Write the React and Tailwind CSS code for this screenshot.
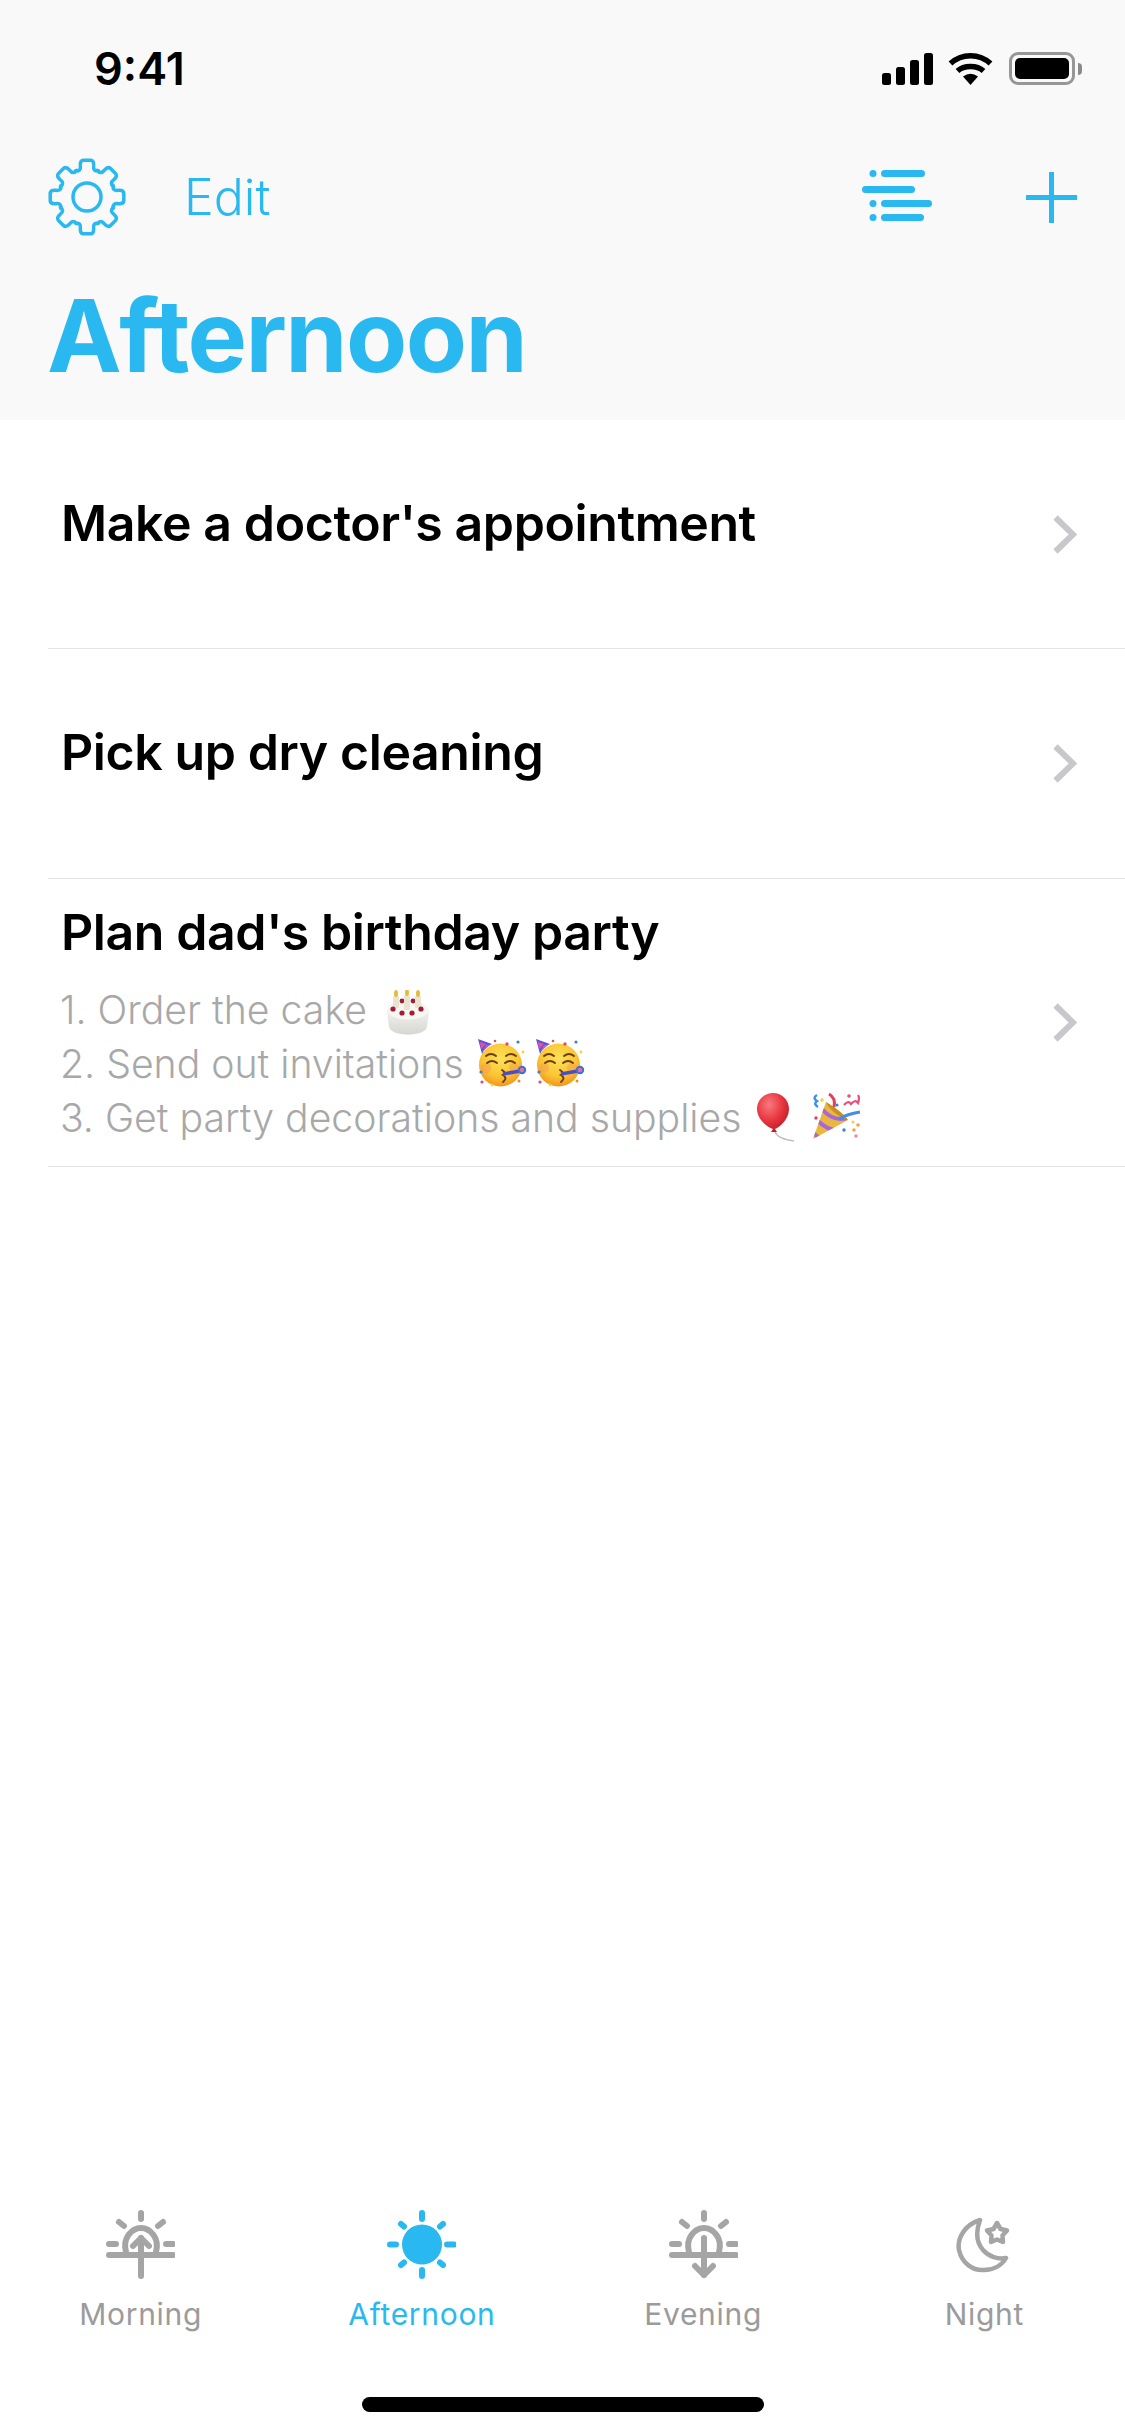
const BLUE = "#29b9f0";
const GRAY = "#a5a5a5";

function gearPath() {
    const c = 39;
    const pt = (deg, r) => {
        const a = (deg * Math.PI) / 180;
        return `${(c + r * Math.cos(a)).toFixed(2)} ${(c + r * Math.sin(a)).toFixed(2)}`;
    };
    let d = "";
    for (let i = 0; i < 8; i++) {
        const t = i * 45 - 90;
        d += `${i === 0 ? "M" : "L"}${pt(t - 24, 28.5)} `;
        d += `Q${pt(t - 13, 26)} ${pt(t - 12, 32)} `;
        d += `Q${pt(t - 11, 37)} ${pt(t - 6, 37)} `;
        d += `L${pt(t + 6, 37)} `;
        d += `Q${pt(t + 11, 37)} ${pt(t + 12, 32)} `;
        d += `Q${pt(t + 13, 26)} ${pt(t + 24, 28.5)} `;
    }
    return d + "Z";
}

function Gear() {
    return (
        <svg width="78" height="78" viewBox="0 0 78 78" fill="none" stroke={BLUE} strokeWidth="3.5" strokeLinejoin="round">
            <path d={gearPath()} />
            <circle cx="39" cy="39" r="14" />
        </svg>
    );
}

function Signal() {
    return (
        <svg width="51" height="32" viewBox="0 0 51 32" fill="#000">
            <rect x="0" y="20" width="9" height="12" rx="2.5" />
            <rect x="14" y="14" width="9" height="18" rx="2.5" />
            <rect x="28" y="7" width="9" height="25" rx="2.5" />
            <rect x="42" y="0" width="9" height="32" rx="2.5" />
        </svg>
    );
}

function Wifi() {
    return (
        <svg width="45" height="33" viewBox="0 0 45 33" fill="none" stroke="#000" strokeWidth="5.5">
            <path d="M2.5 11.5C13.5 1 31.5 1 42.5 11.5" />
            <path d="M9.5 19C16 13 29 13 35.5 19" />
            <path d="M15 24.5Q22.5 19 30 24.5L22.5 33Z" fill="#000" stroke="none" />
        </svg>
    );
}

function Battery() {
    return (
        <div className="flex items-center ml-[1px]">
            <div className="w-[66px] h-[33px] rounded-[9px] border-[3px] border-[#979797] p-[3px]">
                <div className="w-full h-full rounded-[5px] bg-black" />
            </div>
            <div className="ml-[3px] w-[4px] h-[12px] rounded-r-[4px] bg-[#8a8a8a]" />
        </div>
    );
}

function ListIcon() {
    return (
        <svg width="70" height="54" viewBox="0 0 70 54" fill={BLUE}>
            <circle cx="11" cy="3.5" r="3.5" />
            <rect x="19" y="0" width="44" height="7" rx="3.5" />
            <rect x="0" y="16" width="53" height="7" rx="3.5" />
            <circle cx="11" cy="33.5" r="3.5" />
            <rect x="19" y="30" width="51" height="7" rx="3.5" />
            <circle cx="11" cy="47.5" r="3.5" />
            <rect x="19" y="44" width="43" height="7" rx="3.5" />
        </svg>
    );
}

function Plus() {
    return (
        <svg width="51" height="51" viewBox="0 0 51 51" fill={BLUE}>
            <rect x="23" y="0" width="5" height="51" />
            <rect x="0" y="23" width="51" height="5" />
        </svg>
    );
}

function Chevron() {
    return (
        <svg width="24" height="39" viewBox="0 0 24 39" fill="none" stroke="#c7c7cc" strokeWidth="6">
            <path d="M2.5 2.5L20 19.5L2.5 36.5" />
        </svg>
    );
}

function Rays({ color }) {
    return (
        <g stroke={color} strokeWidth="6" strokeLinecap="round" fill="none">
            <path d="M35 3V9" />
            <path d="M13 12L18 16" />
            <path d="M57 12L52 16" />
            <path d="M3 34H10" />
            <path d="M60 34H67" />
        </g>
    );
}

function Sunrise() {
    return (
        <svg width="69" height="69" viewBox="0 0 69 69">
            <Rays color={GRAY} />
            <g stroke={GRAY} strokeWidth="6" strokeLinecap="round" strokeLinejoin="round" fill="none">
                <path d="M20 42C16 28 26 18 35 18C44 18 54 28 50 42" />
                <path d="M3 45H67" />
                <path d="M35 66V28" />
                <path d="M27 36L35 28L43 36" />
            </g>
        </svg>
    );
}

function Sunset() {
    return (
        <svg width="69" height="69" viewBox="0 0 69 69">
            <Rays color={GRAY} />
            <g stroke={GRAY} strokeWidth="6" strokeLinecap="round" strokeLinejoin="round" fill="none">
                <path d="M20 42C16 28 26 18 35 18C44 18 54 28 50 42" />
                <path d="M3 45H67" />
                <path d="M35 28V65" />
                <path d="M26 56L35 65L44 56" />
            </g>
        </svg>
    );
}

function Sun() {
    return (
        <svg width="69" height="69" viewBox="0 0 69 69">
            <circle cx="35" cy="34.5" r="20" fill={BLUE} />
            <g stroke={BLUE} strokeWidth="6" strokeLinecap="round">
                <path d="M35 3V9" />
                <path d="M35 60V66" />
                <path d="M3 34.5H9" />
                <path d="M60 34.5H67" />
                <path d="M14 14L17 16.5" />
                <path d="M56 14L53 16.5" />
                <path d="M14 55L17 52.5" />
                <path d="M56 55L53 52.5" />
            </g>
        </svg>
    );
}

function Moon() {
    return (
        <svg width="56" height="56" viewBox="0 0 56 56" fill="none" stroke={GRAY} strokeWidth="4.5" strokeLinejoin="round">
            <path d="M24 3C8 8 1 22 3 33C6 47 18 54 28 53C38 53 46 48 50 41C34 44 14 30 24 3Z" />
            <path d="M41 6L44.5 12L51 13.5L46.5 18.5L47 25L41 22.5L35 25L35.5 18.5L31 13.5L37.5 12Z" />
        </svg>
    );
}

function Cake() {
    return (
        <svg className="inline-block align-[-12px] ml-[18px]" width="46" height="46" viewBox="0 0 46 46">
            <defs>
                <linearGradient id="cakeSide" x1="0" y1="0" x2="0" y2="1">
                    <stop offset="0" stopColor="#f7f7f5" />
                    <stop offset="1" stopColor="#d6d6d2" />
                </linearGradient>
            </defs>
            <path d="M2 21C2 13 44 13 44 21L42 37C40 47 6 47 4 37Z" fill="url(#cakeSide)" />
            <ellipse cx="23" cy="20" rx="20.5" ry="9.5" fill="#f6f6f3" />
            <g fill="#a51c34">
                <circle cx="17" cy="11" r="2.4" />
                <circle cx="28" cy="11" r="2.4" />
            </g>
            <g fill="#e9e4d2">
                <rect x="8" y="6" width="6" height="12" rx="1" />
                <rect x="19" y="5" width="6" height="15" rx="1" />
                <rect x="30" y="6" width="6" height="12" rx="1" />
            </g>
            <g fill="#e5bb3c">
                <ellipse cx="11" cy="3.5" rx="2" ry="3.5" />
                <ellipse cx="22" cy="2.5" rx="2" ry="3.5" />
                <ellipse cx="33" cy="3.5" rx="2" ry="3.5" />
            </g>
            <g fill="#a51c34">
                <circle cx="8" cy="19" r="2.6" />
                <circle cx="17" cy="23" r="2.6" />
                <circle cx="27" cy="23" r="2.6" />
                <circle cx="36" cy="19" r="2.6" />
            </g>
        </svg>
    );
}

function PartyFace({ className }) {
    return (
        <svg className={className} width="50" height="50" viewBox="0 0 50 50">
            <defs>
                <radialGradient id="faceFill" cx="0.5" cy="0.35" r="0.7">
                    <stop offset="0" stopColor="#fde15a" />
                    <stop offset="0.6" stopColor="#fbc531" />
                    <stop offset="1" stopColor="#f08a1c" />
                </radialGradient>
            </defs>
            <circle cx="23.5" cy="27" r="21.5" fill="url(#faceFill)" />
            <circle cx="9" cy="30" r="5" fill="#f59a55" opacity="0.5" />
            <circle cx="37" cy="30" r="5" fill="#f59a55" opacity="0.5" />
            <path d="M1 1L15 6Q8 9 5 16Z" fill="#5b57d6" />
            <path d="M3 4L9 6L4 11ZM9 7L13 7L6 13Z" fill="#e84fa0" />
            <g fill="none" stroke="#6d3d12" strokeWidth="2" strokeLinecap="round">
                <path d="M9 18Q14 14 19 18" />
                <path d="M29 18Q34 14 39 18" />
                <path d="M10 25Q15 21 20 25" />
                <path d="M28 25Q33 21 38 25" />
                <path d="M25 32Q30 35 26 37Q31 40 26 44" />
            </g>
            <path d="M26 36L43 33" stroke="#4c4fc4" strokeWidth="3.5" />
            <circle cx="45" cy="32" r="3.2" fill="#e86f9a" stroke="#3f6fd0" strokeWidth="2" />
            <g fill="#e14b6d">
                <circle cx="30" cy="6" r="1.7" />
                <circle cx="5" cy="44" r="1.6" />
                <circle cx="18" cy="3" r="1.3" />
            </g>
            <g fill="#3b7de0">
                <circle cx="41" cy="4" r="1.6" />
                <circle cx="4" cy="34" r="1.6" />
            </g>
            <g fill="#f6d13a">
                <circle cx="46" cy="14" r="1.4" />
                <circle cx="15" cy="47" r="1.4" />
            </g>
            <circle cx="42" cy="43" r="1.5" fill="#f08a1c" />
        </svg>
    );
}

function Balloon() {
    return (
        <svg className="inline-block align-[-10px] ml-[15px]" width="40" height="50" viewBox="0 0 40 50">
            <defs>
                <radialGradient id="balloonFill" cx="0.38" cy="0.3" r="0.75">
                    <stop offset="0" stopColor="#f8797f" />
                    <stop offset="0.55" stopColor="#e8363f" />
                    <stop offset="1" stopColor="#b81a26" />
                </radialGradient>
            </defs>
            <path d="M17 1C26 1 33 8 33 17C33 27 24 35 19 37L21 40H15L17 37C11 35 1 27 1 17C1 8 8 1 17 1Z" fill="url(#balloonFill)" />
            <path d="M19 40Q22 47 38 49" fill="none" stroke="#bdbdbd" strokeWidth="1.5" />
        </svg>
    );
}

function Popper() {
    return (
        <svg className="inline-block align-[-10px] ml-[15px]" width="51" height="50" viewBox="0 0 51 50">
            <defs>
                <clipPath id="coneClip">
                    <path d="M2 47L15 10C22 14 33 22 37 28Z" />
                </clipPath>
            </defs>
            <path d="M2 47L15 10C22 14 33 22 37 28Z" fill="#e9b740" />
            <g clipPath="url(#coneClip)" stroke="#a866d8" strokeWidth="4" fill="none">
                <path d="M6 28Q18 40 30 38" />
                <path d="M11 17Q22 30 36 26" />
                <path d="M2 40Q6 46 14 48" />
            </g>
            <path d="M15 10C22 14 33 22 37 28C30 26 18 18 15 10Z" fill="#c98f22" />
            <path d="M28 27Q36 22 49 20" fill="none" stroke="#3f8fe8" strokeWidth="3" />
            <path d="M18 2Q25 6 23 15" fill="none" stroke="#e0405a" strokeWidth="3" />
            <path d="M6 3Q1 6 6 9Q2 12 7 15" fill="none" stroke="#3f8fe8" strokeWidth="2.5" />
            <path d="M33 13Q37 8 40 12Q44 7 47 11Q49 6 47 3" fill="none" stroke="#e8507a" strokeWidth="2.2" />
            <circle cx="11" cy="8" r="1.8" fill="#f6d13a" />
            <circle cx="26" cy="13" r="1.6" fill="#3b7de0" />
            <circle cx="38" cy="4" r="1.8" fill="#e8507a" />
            <circle cx="5" cy="26" r="1.7" fill="#e0405a" />
            <circle cx="33" cy="38" r="1.7" fill="#3b7de0" />
            <circle cx="42" cy="30" r="1.6" fill="#f6d13a" />
            <circle cx="47" cy="33" r="1.8" fill="#f0a050" />
            <circle cx="43" cy="38" r="1.7" fill="#f0a050" />
            <circle cx="45" cy="44" r="1.8" fill="#f08ba0" />
        </svg>
    );
}

function Row({ title, children, className }) {
    return (
        <div className={`ml-[48px] pl-[13px] pr-[48px] flex items-center justify-between border-b border-[#e3e3e3] ${className}`}>
            <div className="self-start">
                <p className="text-[50px] leading-[60px] font-semibold text-black tracking-[-0.4px]">{title}</p>
                {children}
            </div>
            <Chevron />
        </div>
    );
}

const tabs = [
    { label: "Morning", icon: <Sunrise /> },
    { label: "Afternoon", icon: <Sun />, active: true },
    { label: "Evening", icon: <Sunset /> },
    { label: "Night", icon: <Moon /> },
];

export default function App() {
    return (
        <div className="w-[1125px] h-[2436px] bg-white flex flex-col justify-between font-['Inter',sans-serif]">
            <div>
                <header className="h-[420px] bg-[#f9f9f9] flex flex-col">
                    <div className="h-[158px] pl-[94px] pr-[43px] pt-[44px] flex justify-between items-start">
                        <span className="text-[45px] leading-[50px] font-semibold text-black">9:41</span>
                        <div className="flex items-center gap-[15px] pt-[8px]">
                            <Signal />
                            <Wifi />
                            <Battery />
                        </div>
                    </div>
                    <div className="h-[78px] pl-[48px] pr-[48px] flex items-center justify-between">
                        <div className="flex items-center gap-[58px]">
                            <Gear />
                            <span className="text-[50px] leading-[58px] font-light text-[#29b9f0]">Edit</span>
                        </div>
                        <div className="flex items-center gap-[94px]">
                            <ListIcon />
                            <Plus />
                        </div>
                    </div>
                    <h1 className="pl-[47px] mt-[40px] text-[100px] leading-[120px] font-bold text-[#29b9f0] tracking-[-1.6px]">Afternoon</h1>
                </header>
                <Row title="Make a doctor's appointment" className="h-[229px] [&>div]:pt-[73px]" />
                <Row title="Pick up dry cleaning" className="h-[230px] [&>div]:pt-[73px]" />
                <Row title="Plan dad's birthday party" className="h-[288px] [&>div]:pt-[23px]">
                    <div className="mt-[21px] -ml-[1px] text-[39.2px] leading-[54px] font-light text-[#a8a8a8]">
                        <p>1. Order the cake<Cake /></p>
                        <p>2. Send out invitations<PartyFace className="inline-block align-[-10px] ml-[13px]" /><PartyFace className="inline-block align-[-10px] ml-[8px]" /></p>
                        <p>3. Get party decorations and supplies<Balloon /><Popper /></p>
                    </div>
                </Row>
            </div>
            <div className="pb-[24px]">
                <nav className="grid grid-cols-4">
                    {tabs.map((tab) => (
                        <div key={tab.label} className="flex flex-col items-center">
                            <div className="h-[69px] flex items-center">{tab.icon}</div>
                            <span className={`mt-[17px] text-[30px] leading-[36px] tracking-[0.7px] ${tab.active ? "text-[#29b9f0]" : "text-[#9b9b9b]"}`}>
                                {tab.label}
                            </span>
                        </div>
                    ))}
                </nav>
                <div className="mt-[65px] mx-auto w-[402px] h-[15px] rounded-full bg-black" />
            </div>
        </div>
    );
}
